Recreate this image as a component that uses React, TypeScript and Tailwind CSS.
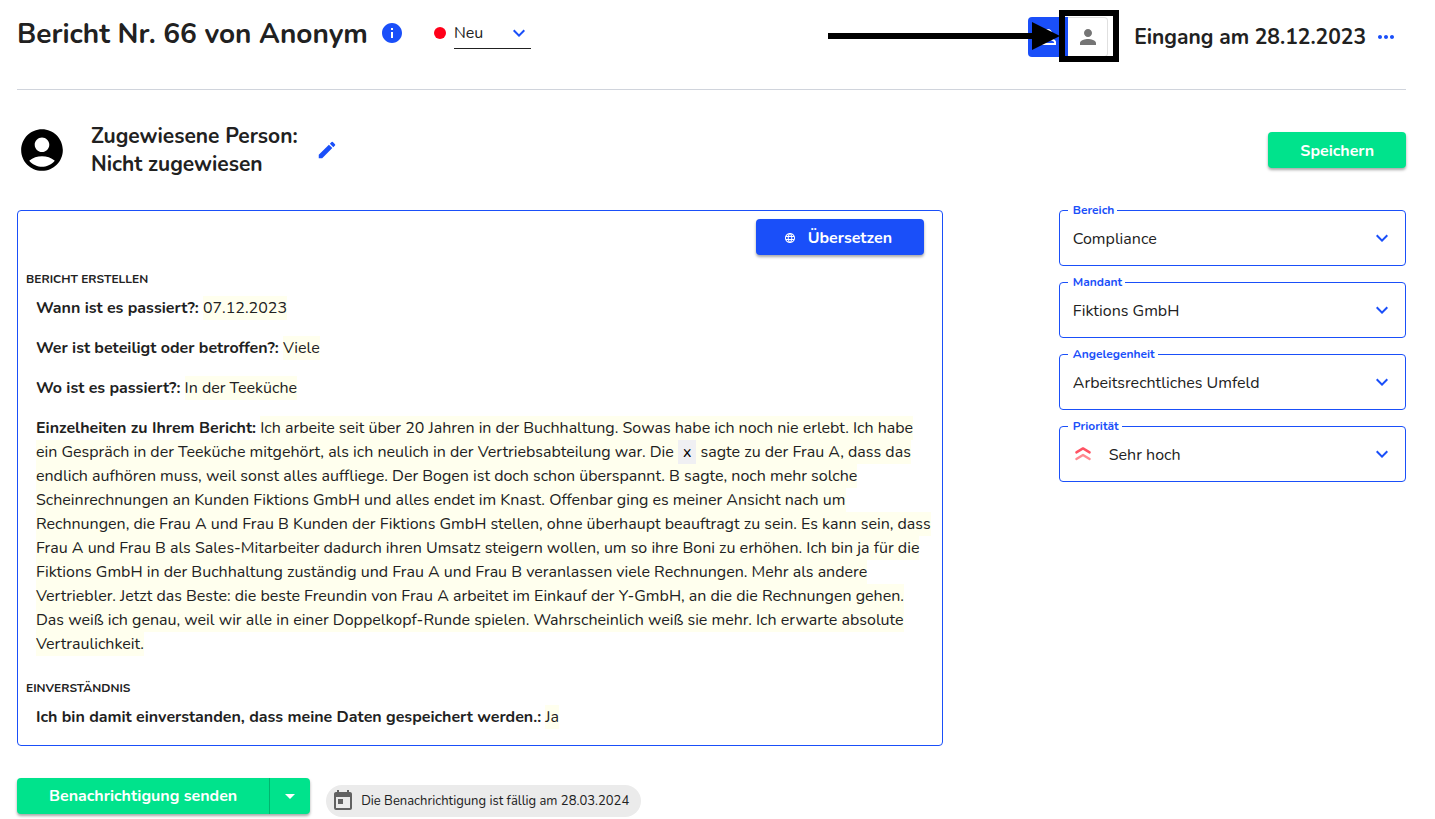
import React, { useState } from 'react';
import {
  MdAccountCircle,
  MdArrowDropDown,
  MdEdit,
  MdExpandMore,
  MdInfo,
  MdLanguage,
  MdMoreHoriz,
  MdOutlinePersonOutline,
  MdPerson,
  MdToday,
} from 'react-icons/md';

interface SelectFieldProps {
  id: string;
  label: string;
  options: string[];
  icon?: React.ReactNode;
}

const PriorityIcon = () => (
  <svg width="24" height="24" viewBox="0 0 24 24" fill="none" strokeWidth="2.4" strokeLinecap="round" strokeLinejoin="round">
    <path d="M5.4 10.4 L12 6.4 L18.6 10.4" stroke="#ff5263" />
    <path d="M5.4 17 L12 13 L18.6 17" stroke="#ff8a91" />
  </svg>
);

const SelectField: React.FC<SelectFieldProps> = ({ id, label, options, icon }) => {
  const [value, setValue] = useState(options[0]);

  return (
    <fieldset className="min-w-0 rounded border border-[#1a4ff9] pb-[5px]">
      <legend className="ml-2 pl-[5px] pr-[3px] text-xs leading-3 font-bold text-[#1a4ff9]">
        <label htmlFor={id}>{label}</label>
      </legend>
      <div className="relative flex items-center">
        {icon && <span className="pointer-events-none absolute left-[11px]">{icon}</span>}
        <select
          id={id}
          value={value}
          onChange={e => setValue(e.target.value)}
          className={`h-11 w-full appearance-none bg-transparent pt-[2px] pr-12 outline-none ${icon ? 'pl-[49px]' : 'pl-[13px]'}`}
        >
          {options.map(o => <option key={o}>{o}</option>)}
        </select>
        <MdExpandMore className="pointer-events-none absolute right-[11px] text-2xl text-[#1a4ff9]" />
      </div>
    </fieldset>
  );
};

const Answer: React.FC<{ question: string; children: React.ReactNode }> = ({ question, children }) => (
  <p>
    <strong className="font-bold">{question}:</strong>{' '}
    <span className="bg-[#ffffee] py-px">{children}</span>
  </p>
);

export default function App() {
  const [status, setStatus] = useState('Neu');
  const [view, setView] = useState('person');

  return (
    <div className="min-h-screen bg-white pr-[29px] pl-[17px] font-['Nunito','Lato',sans-serif] text-base text-[#212121]">
      <header className="flex h-[90px] items-start justify-between border-b border-[#d0d4dc]">
        <div className="flex items-center pt-[11px]">
          <h1 className="pt-[2px] text-[28px] leading-[42px] font-bold">Bericht Nr. 66 von Anonym</h1>
          <button aria-label="Info" className="ml-3 text-2xl text-[#1a4ff9]"><MdInfo /></button>
          <span className="ml-[30px] h-3 w-3 rounded-full bg-[#ff0019]"></span>
          <div className="relative ml-2 flex items-center border-b border-[#212121]">
            <select
              aria-label="Status"
              value={status}
              onChange={e => setStatus(e.target.value)}
              className="h-[30px] w-[77px] appearance-none bg-transparent outline-none"
            >
              <option>Neu</option>
              <option>In Bearbeitung</option>
              <option>Geschlossen</option>
            </select>
            <MdExpandMore className="pointer-events-none absolute right-0 text-2xl text-[#1a4ff9]" />
          </div>
        </div>

        <div className="flex items-center pt-[17px]">
          <div className="relative flex">
            <button aria-label="Anonym" onClick={() => setView('anonym')} className="flex h-10 w-10 items-center justify-center rounded-l bg-[#1a4ff9] text-2xl text-white">
              <MdOutlinePersonOutline />
            </button>
            <button aria-label="Person" aria-pressed={view === 'person'} onClick={() => setView('person')} className="flex h-10 w-10 items-center justify-center rounded-r border border-l-0 border-[#e0e0e0] text-2xl text-[#757575]">
              <MdPerson />
            </button>
            {/* pointer to the person toggle */}
            <svg className="pointer-events-none absolute -top-[7px] -left-[200px]" width="291" height="52" viewBox="0 0 291 52">
              <path d="M0 26 H206" stroke="#000" strokeWidth="6" />
              <path d="M204 12 L232 26 L204 40 Z" fill="#000" />
              <rect x="234" y="3" width="54" height="46" fill="none" stroke="#000" strokeWidth="6" />
            </svg>
          </div>
          <h2 className="ml-[26px] text-[21px] leading-7 font-bold">Eingang am 28.12.2023</h2>
          <button aria-label="Mehr" className="mx-2 text-2xl text-[#1a4ff9]"><MdMoreHoriz /></button>
        </div>
      </header>

      <section className="flex items-center justify-between py-8">
        <div className="flex items-center">
          <MdAccountCircle className="text-[50px] text-black" />
          <h2 className="ml-6 text-[21px] leading-7 font-bold">
            Zugewiesene Person:
            <br />
            Nicht zugewiesen
          </h2>
          <button aria-label="Bearbeiten" className="ml-[18px] text-[22px] text-[#1a4ff9]"><MdEdit /></button>
        </div>
        <button className="h-9 rounded bg-[#00e38c] px-8 pt-[2px] font-bold text-white shadow-[0_2px_3px_rgba(0,0,0,0.35)]">Speichern</button>
      </section>

      <main className="grid grid-cols-12 items-start">
        <div className="col-span-8">
          <article className="rounded border border-[#1a4ff9] px-2 pt-2 pb-4">
            <div className="flex justify-end pr-[10px]">
              <button className="flex h-9 items-center gap-3 rounded bg-[#1a4ff9] pt-[2px] pr-8 pl-7 font-bold text-white shadow-[0_2px_3px_rgba(0,0,0,0.35)]">
                <MdLanguage className="text-xs" />
                Übersetzen
              </button>
            </div>
            <h3 className="mt-3 text-xs leading-6 font-bold">BERICHT ERSTELLEN</h3>
            <div className="mt-[5px] space-y-4 pl-[10px]">
              <Answer question="Wann ist es passiert?">07.12.2023</Answer>
              <Answer question="Wer ist beteiligt oder betroffen?">Viele</Answer>
              <Answer question="Wo ist es passiert?">In der Teeküche</Answer>
              <Answer question="Einzelheiten zu Ihrem Bericht">
                Ich arbeite seit über 20 Jahren in der Buchhaltung. Sowas habe ich noch nie erlebt. Ich habe
                ein Gespräch in der Teeküche mitgehört, als ich neulich in der Vertriebsabteilung war. Die{' '}
                <mark className="bg-[#f0f0f3] px-[5px] py-px text-black">x</mark> sagte zu der Frau A, dass das
                endlich aufhören muss, weil sonst alles auffliege. Der Bogen ist doch schon überspannt. B sagte,
                noch mehr solche Scheinrechnungen an Kunden Fiktions GmbH und alles endet im Knast. Offenbar ging
                es meiner Ansicht nach um Rechnungen, die Frau A und Frau B Kunden der Fiktions GmbH stellen, ohne
                überhaupt beauftragt zu sein. Es kann sein, dass Frau A und Frau B als Sales-Mitarbeiter dadurch
                ihren Umsatz steigern wollen, um so ihre Boni zu erhöhen. Ich bin ja für die Fiktions GmbH in der
                Buchhaltung zuständig und Frau A und Frau B veranlassen viele Rechnungen. Mehr als andere
                Vertriebler. Jetzt das Beste: die beste Freundin von Frau A arbeitet im Einkauf der Y-GmbH, an die
                die Rechnungen gehen. Das weiß ich genau, weil wir alle in einer Doppelkopf-Runde spielen.
                Wahrscheinlich weiß sie mehr. Ich erwarte absolute Vertraulichkeit.
              </Answer>
            </div>
            <h3 className="mt-5 text-xs leading-6 font-bold">EINVERSTÄNDNIS</h3>
            <div className="mt-[5px] pl-[10px]">
              <Answer question="Ich bin damit einverstanden, dass meine Daten gespeichert werden.">Ja</Answer>
            </div>
          </article>

          <div className="mt-8 flex items-start gap-4">
            <div className="flex h-9 rounded bg-[#00e38c] text-white shadow-[0_2px_3px_rgba(0,0,0,0.35)]">
              <button className="px-8 font-bold">Benachrichtigung senden</button>
              <button aria-label="Weitere Optionen" className="flex w-[41px] items-center justify-center border-l border-[#00b56f] text-2xl">
                <MdArrowDropDown />
              </button>
            </div>
            <div className="mt-[7px] flex h-8 items-center gap-[6px] rounded-full bg-[#ebebeb] pr-3 pl-[5px] text-[13px]">
              <MdToday className="text-2xl text-[#616161]" />
              <span className="pt-px">Die Benachrichtigung ist fällig am 28.03.2024</span>
            </div>
          </div>
        </div>

        <aside className="col-span-3 col-start-10 -mt-[6px] space-y-[10px]">
          <SelectField id="bereich" label="Bereich" options={['Compliance']} />
          <SelectField id="mandant" label="Mandant" options={['Fiktions GmbH']} />
          <SelectField id="angelegenheit" label="Angelegenheit" options={['Arbeitsrechtliches Umfeld']} />
          <SelectField id="prioritaet" label="Priorität" options={['Sehr hoch']} icon={<PriorityIcon />} />
        </aside>
      </main>
    </div>
  );
}
